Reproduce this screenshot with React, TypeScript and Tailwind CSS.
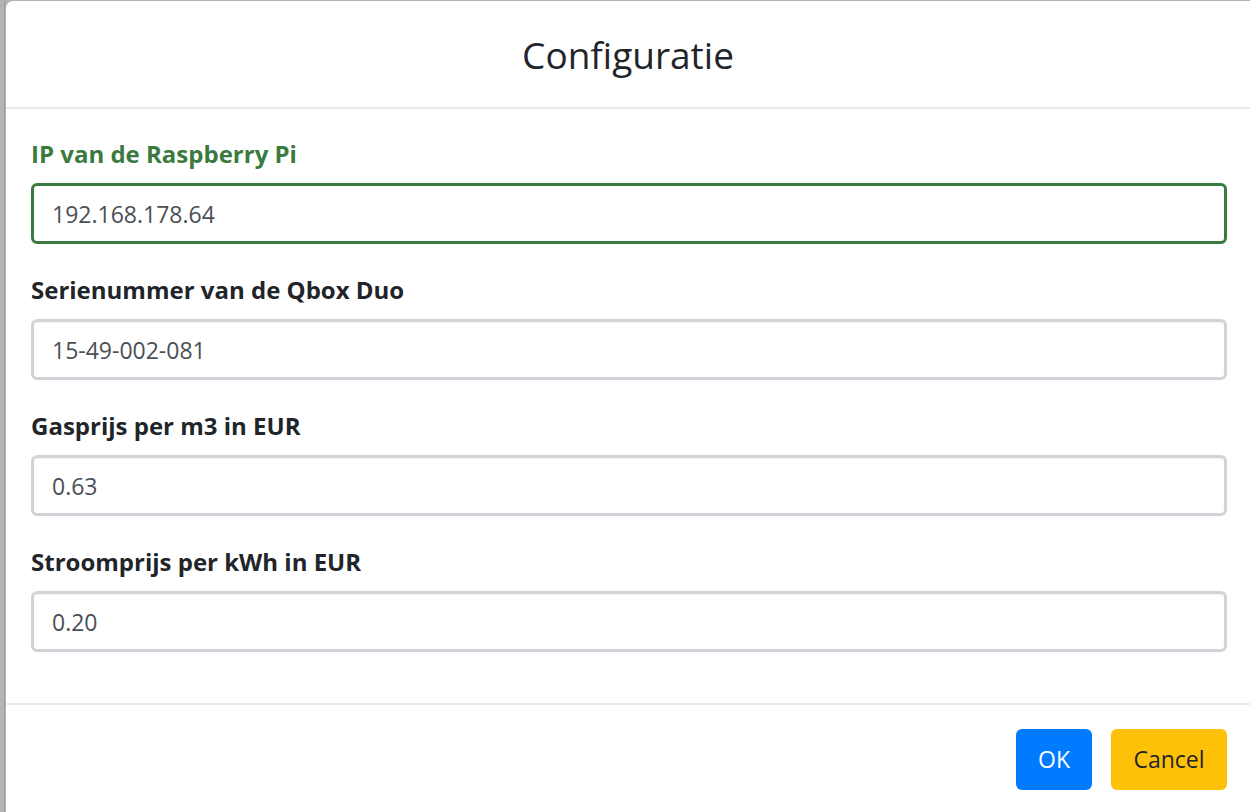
const fields = [
  { label: 'IP van de Raspberry Pi', value: '192.168.178.64', active: true },
  { label: 'Serienummer van de Qbox Duo', value: '15-49-002-081' },
  { label: 'Gasprijs per m3 in EUR', value: '0.63' },
  { label: 'Stroomprijs per kWh in EUR', value: '0.20' },
];

export default function App() {
  return (
    <div className="flex h-[812px] w-full overflow-hidden bg-[#b4b4b6] font-['Open_Sans','Noto_Sans',sans-serif]">
      <div className="w-[5px] border-r border-[#9c9ca0]" />
      <div className="ml-[1px] mt-[1px] flex flex-1 flex-col rounded-tl-[7px] bg-white">
        {/* header */}
        <div className="flex h-[108px] items-center justify-center border-b-2 border-[#e7e9ec]">
          <h4 className="text-[37px] leading-none text-[#212529]">Configuratie</h4>
        </div>

        {/* body */}
        <div className="flex flex-col gap-[27px] pl-[25px] pr-[23px] pb-[51px] pt-[26px]">
          {fields.map(f => (
            <div key={f.label} className="flex flex-col gap-[10px]">
              <label
                className={
                  'h-[38px] leading-[38px] text-[24px] font-bold ' +
                  (f.active ? 'text-[#3b7a3f]' : 'text-[#212529]')
                }
              >
                {f.label}
              </label>
              <input
                readOnly
                value={f.value}
                className={
                  'h-[61px] rounded-[6px] border-[3px] px-[18px] text-[23px] text-[#495057] outline-none ' +
                  (f.active
                    ? 'border-[#3b7a3f]'
                    : 'border-[#d0d4d9] shadow-[inset_0_1px_2px_rgba(0,0,0,0.06)]')
                }
              />
            </div>
          ))}
        </div>

        {/* footer */}
        <div className="flex justify-end gap-[19px] border-t-2 border-[#e7e9ec] px-[23px] pt-[24px]">
          <button className="h-[61px] w-[76px] rounded-[6px] bg-[#007bff] text-[23px] text-white">
            OK
          </button>
          <button className="h-[61px] w-[116px] rounded-[6px] bg-[#ffc107] text-[23px] text-[#212529]">
            Cancel
          </button>
        </div>
      </div>
    </div>
  );
}
